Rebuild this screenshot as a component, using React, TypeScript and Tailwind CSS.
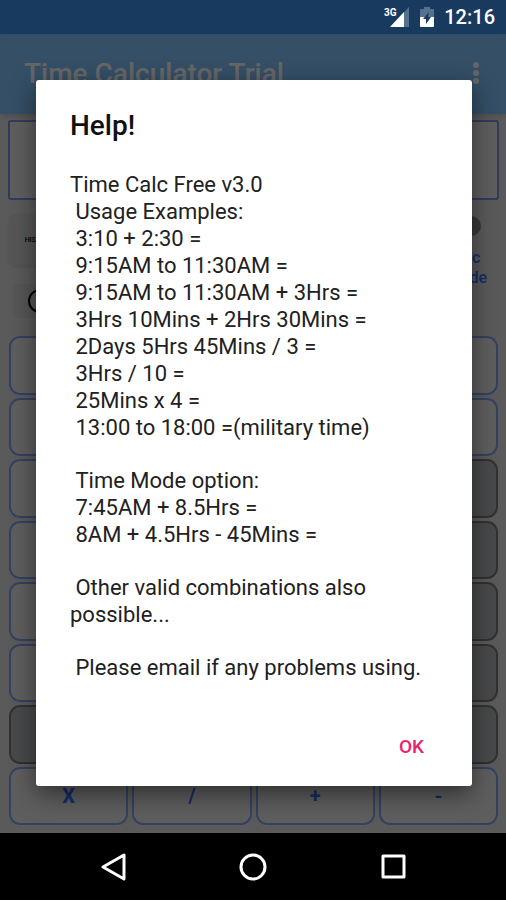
import { clsx } from 'clsx'

type Tone = 'light' | 'gray'

interface Key {
  label?: string
  tone: Tone
}

const light: Key = { tone: 'light' }
const gray: Key = { tone: 'gray' }

const keys: Key[] = [
  light, light, light, light,
  light, light, light, light,
  light, light, light, gray,
  light, light, light, gray,
  light, light, light, gray,
  light, light, light, gray,
  gray, gray, gray, gray,
  { label: 'X', tone: 'light' },
  { label: '/', tone: 'light' },
  { label: '+', tone: 'light' },
  { label: '-', tone: 'light' },
]

const helpText = [
  `Time Calc Free v3.0
 Usage Examples:
 3:10 + 2:30 =
 9:15AM to 11:30AM =
 9:15AM to 11:30AM + 3Hrs =
 3Hrs 10Mins + 2Hrs 30Mins =
 2Days 5Hrs 45Mins / 3 =
 3Hrs / 10 =
 25Mins x 4 =
 13:00 to 18:00 =(military time)`,
  ` Time Mode option:
 7:45AM + 8.5Hrs =
 8AM + 4.5Hrs - 45Mins =`,
  ` Other valid combinations also possible...`,
  ` Please email if any problems using.`,
]

function StatusBar() {
  return (
    <div className="flex h-[34px] shrink-0 items-center justify-end gap-[10px] bg-[#193a5f] pr-[11px] text-white">
      <svg className="h-[22px] w-[26px]" viewBox="0 0 26 22" aria-hidden="true">
        <path d="M25 1v20H6z" fill="#57718d" />
        <path d="M20 6v15H6z" fill="#fff" />
        <text x="0" y="10" fontSize="10" fontWeight="700" fill="#fff">3G</text>
      </svg>
      <svg className="h-[22px] w-[14px]" viewBox="0 0 14 22" aria-hidden="true">
        <path d="M4 1h6v2h3a1 1 0 0 1 1 1v7H0V4a1 1 0 0 1 1-1h3z" fill="#57718d" />
        <path d="M0 11h14v9a1 1 0 0 1-1 1H1a1 1 0 0 1-1-1z" fill="#fff" />
        <path d="M9 6l-6 7h3v5l5-7H8z" fill="#193a5f" />
      </svg>
      <span className="text-[20px] font-medium">12:16</span>
    </div>
  )
}

function AppBar() {
  return (
    <header className="flex h-20 shrink-0 items-center justify-between bg-[#82c5ff] pl-6 pr-[19px] shadow-md">
      <h1 className="text-[28px] font-medium text-white">Time Calculator Trial</h1>
      <button type="button" aria-label="More options" className="px-2">
        <svg className="h-6 w-[6px]" viewBox="0 0 6 24" fill="#fff">
          <circle cx="3" cy="3" r="3" />
          <circle cx="3" cy="11" r="3" />
          <circle cx="3" cy="19" r="3" />
        </svg>
      </button>
    </header>
  )
}

function Toolbar() {
  return (
    <div className="flex justify-between pl-px pr-3">
      <div className="flex flex-col items-start gap-[18px]">
        <button type="button" className="h-[52px] w-[60px] rounded-md bg-[#d8d8d8] text-[7px] font-medium shadow-sm">
          HISTORY
        </button>
        <button type="button" aria-label="Clock" className="ml-1 flex h-[34px] w-[54px] items-center justify-center rounded-sm bg-[#d8d8d8]">
          <svg className="h-6 w-6" viewBox="0 0 24 24" fill="none" stroke="#000" strokeWidth="2">
            <circle cx="12" cy="12" r="11" />
            <path d="M12 6v6l4 3" />
          </svg>
        </button>
      </div>
      <label className="flex flex-col items-center pt-[2px] text-[16px] leading-5 font-medium text-[#3070ff]">
        <input type="checkbox" className="mb-3 h-5 w-7 appearance-none rounded-full bg-[#8c8c8c]" />
        <span>Dec</span>
        <span>Mode</span>
      </label>
    </div>
  )
}

function Keypad() {
  return (
    <div className="grid flex-1 auto-rows-fr grid-cols-4 gap-x-1 gap-y-[3px]">
      {keys.map((key, i) => (
        <button
          key={i}
          type="button"
          className={clsx(
            'rounded-[11px] border-2 text-[20px] font-bold text-[#3070ff]',
            key.tone === 'gray' ? 'border-[#7c7c7c] bg-[#b2b6ba]' : 'border-[#84a4f4] bg-[#ebebeb]',
          )}
        >
          {key.label}
        </button>
      ))}
    </div>
  )
}

function HelpDialog() {
  return (
    <div className="absolute inset-0 flex items-center bg-black/60 pr-[34px] pb-0.5 pl-9">
      <div
        role="dialog"
        aria-labelledby="help-title"
        className="w-full rounded-[3px] bg-white pt-7 pb-[14px] text-[#212121] shadow-[0_8px_24px_rgba(0,0,0,0.5)]"
      >
        <h2 id="help-title" className="px-[34px] text-[28px] leading-9 font-medium text-[#111111]">Help!</h2>
        <div className="mt-[27px] flex flex-col gap-[26px] pr-6 pl-[34px] text-[22px] leading-[27px]">
          {helpText.map((block) => (
            <p key={block} className="whitespace-pre-wrap">{block}</p>
          ))}
        </div>
        <div className="mt-[43px] flex justify-end pr-9">
          <button type="button" className="h-12 px-3 text-[19px] font-medium text-[#ec2068]">OK</button>
        </div>
      </div>
    </div>
  )
}

function NavBar() {
  return (
    <nav className="flex h-[67px] shrink-0 items-center justify-center gap-[112px] bg-black">
      <button type="button" aria-label="Back">
        <svg className="h-7 w-7" viewBox="0 0 28 28" fill="none" stroke="#fff" strokeWidth="3" strokeLinejoin="round">
          <path d="M25 2v24L4 14z" />
        </svg>
      </button>
      <button type="button" aria-label="Home">
        <svg className="h-7 w-7" viewBox="0 0 28 28" fill="none" stroke="#fff" strokeWidth="3">
          <circle cx="14" cy="14" r="12" />
        </svg>
      </button>
      <button type="button" aria-label="Recent apps">
        <svg className="h-7 w-7" viewBox="0 0 28 28" fill="none" stroke="#fff" strokeWidth="3" strokeLinejoin="round">
          <path d="M4 3h21v21H4z" />
        </svg>
      </button>
    </nav>
  )
}

export default function App() {
  return (
    <div className="flex min-h-screen flex-col font-['Roboto',sans-serif]">
      <StatusBar />
      <div className="relative flex flex-1 flex-col bg-[#e2e2e2]">
        <AppBar />
        <main className="flex flex-1 flex-col pt-[6px] pr-[7px] pb-2 pl-2">
          <div className="mb-[14px] h-20 rounded-[3px] border-2 border-[#8094e8] bg-[#ebebeb]" />
          <Toolbar />
          <div className="mt-[18px] flex flex-1 flex-col px-px">
            <Keypad />
          </div>
        </main>
        <HelpDialog />
      </div>
      <NavBar />
    </div>
  )
}
